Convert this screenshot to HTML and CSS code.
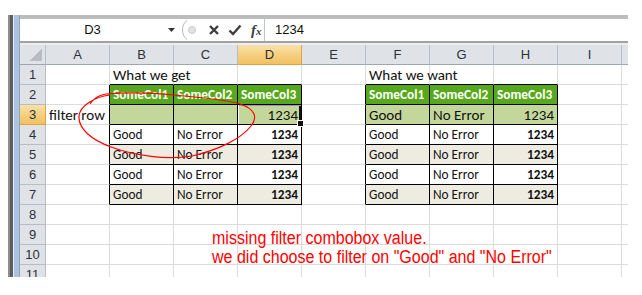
FILE: index.html
```html
<!DOCTYPE html>
<html lang="en">
<head>
    <meta charset="UTF-8">
    <title>Filter row - Excel</title>
    <link rel="stylesheet" href="styles.css">
</head>
<body>
    <div class="app">
        <div class="edge"></div>
        <div class="main">
            <div class="fbar">
                <div class="namebox">D3</div>
                <div class="nb-arrow">
                    <svg width="7" height="4" viewBox="0 0 7 4"><path d="M0 0h7L3.5 4z" fill="#333"/></svg>
                </div>
                <div class="fx-tools">
                    <svg class="grip" width="20" height="22" viewBox="0 0 20 22">
                        <path d="M6 1.5C2.5 4 1.5 8 1.5 11s1 7 4.5 9.5" fill="none" stroke="#b3b3b3"/>
                        <circle cx="11" cy="11" r="3.5" fill="#e3e3e3" stroke="#c9c9c9"/>
                    </svg>
                    <svg class="tool" width="12" height="12" viewBox="0 0 12 12">
                        <path d="M2 2l8 8M10 2l-8 8" stroke="#3f3f3f" stroke-width="2.4"/>
                    </svg>
                    <svg class="tool" width="14" height="12" viewBox="0 0 14 12">
                        <path d="M1.5 6.5l3.5 3.5 7.5-8.5" fill="none" stroke="#3f3f3f" stroke-width="2.4"/>
                    </svg>
                    <span class="fx">f<small>x</small></span>
                </div>
                <div class="fx-input">1234</div>
            </div>

            <table class="sheet">
                <colgroup>
                    <col class="c-rh">
                    <col><col><col><col><col><col><col><col><col><col>
                </colgroup>
                <tr class="colhead">
                    <th class="corner"></th>
                    <th>A</th><th>B</th><th>C</th><th class="on">D</th><th>E</th>
                    <th>F</th><th>G</th><th>H</th><th>I</th><th></th>
                </tr>
                <tr>
                    <th class="rh">1</th>
                    <td></td><td class="above big">What we get</td><td class="above"></td><td class="above"></td><td></td>
                    <td class="above big">What we want</td><td class="above"></td><td class="above"></td><td></td><td></td>
                </tr>
                <tr>
                    <th class="rh">2</th>
                    <td class="before"></td><td class="t hd">SomeCol1</td><td class="t hd">SomeCol2</td><td class="t hd">SomeCol3</td><td class="before"></td>
                    <td class="t hd">SomeCol1</td><td class="t hd">SomeCol2</td><td class="t hd">SomeCol3</td><td></td><td></td>
                </tr>
                <tr>
                    <th class="rh on">3</th>
                    <td class="before big">filter row</td><td class="t flt"></td><td class="t flt"></td><td class="t flt big num sel">1234</td><td class="before"></td>
                    <td class="t flt big">Good</td><td class="t flt big">No Error</td><td class="t flt big num">1234</td><td></td><td></td>
                </tr>
                <tr>
                    <th class="rh">4</th>
                    <td class="before"></td><td class="t">Good</td><td class="t">No Error</td><td class="t num b">1234</td><td class="before"></td>
                    <td class="t">Good</td><td class="t">No Error</td><td class="t num b">1234</td><td></td><td></td>
                </tr>
                <tr>
                    <th class="rh">5</th>
                    <td class="before"></td><td class="t alt">Good</td><td class="t alt">No Error</td><td class="t alt num b">1234</td><td class="before"></td>
                    <td class="t alt">Good</td><td class="t alt">No Error</td><td class="t alt num b">1234</td><td></td><td></td>
                </tr>
                <tr>
                    <th class="rh">6</th>
                    <td class="before"></td><td class="t">Good</td><td class="t">No Error</td><td class="t num b">1234</td><td class="before"></td>
                    <td class="t">Good</td><td class="t">No Error</td><td class="t num b">1234</td><td></td><td></td>
                </tr>
                <tr>
                    <th class="rh">7</th>
                    <td class="before"></td><td class="t alt">Good</td><td class="t alt">No Error</td><td class="t alt num b">1234</td><td class="before"></td>
                    <td class="t alt">Good</td><td class="t alt">No Error</td><td class="t alt num b">1234</td><td></td><td></td>
                </tr>
                <tr>
                    <th class="rh">8</th>
                    <td></td><td></td><td></td><td></td><td></td><td></td><td></td><td></td><td></td><td></td>
                </tr>
                <tr>
                    <th class="rh">9</th>
                    <td></td><td></td><td></td><td></td><td></td><td></td><td></td><td></td><td></td><td></td>
                </tr>
                <tr>
                    <th class="rh">10</th>
                    <td></td><td></td><td></td><td></td><td></td><td></td><td></td><td></td><td></td><td></td>
                </tr>
                <tr>
                    <th class="rh">11</th>
                    <td></td><td></td><td></td><td></td><td></td><td></td><td></td><td></td><td></td><td></td>
                </tr>
            </table>
        </div>
    </div>

    <!-- hand drawn annotation over the sheet -->
    <svg class="ink" width="642" height="295" viewBox="0 0 642 295">
        <path d="M90 104C94 98 99 95 106 94C130 92 155 93 175 95C200 98 226 99 240 104C255 109 258 117 251 126C241 139 218 150 192 156C166 160 136 156 111 147C92 140 78 129 79 116C80 106 94 97 110 95"
              fill="none" stroke="#f00" stroke-width="1.2"/>
    </svg>
    <div class="note">
        missing filter combobox value.<br>
        we did choose to filter on "Good" and "No Error"
    </div>
</body>
</html>
```

FILE: styles.css
```css
:root {
    --cell-font: "Carlito", "Lato", sans-serif;
    --grid: #dadcdd;
    --head-bg: #dfe3e8;
    --head-line: #b7bdc5;
    --table-green: #57a81c;
    --filter-green: #c4d79b;
    --band: #eeece1;
}

* {
    margin: 0;
    padding: 0;
    box-sizing: border-box;
}

body {
    background: white;
    width: 642px;
    height: 295px;
    overflow: hidden;
    position: relative;
    font-family: var(--cell-font);
    color: #111;
}

.app {
    margin: 15px 0 0 8px;
    width: 620px;
    height: 262px;
    display: flex;
    overflow: hidden;
}

.edge {
    width: 12px;
    flex: none;
    background: linear-gradient(to right, #8c8c8c 0 2px, #5d5d5d 2px 5px, #e9eef5 5px 6px, #a8c3e3 6px 11px, #9ba4ae 11px 12px);
}

.main {
    flex: 1;
    overflow: hidden;
    background: #eceef1;
}

/* formula bar */
.fbar {
    display: flex;
    height: 28px;
    background: white;
    border-top: 4px solid #bcbcbc;
    border-bottom: 2px solid #a2a2a2;
    margin-bottom: 2px;
    font-family: "Liberation Sans", sans-serif;
    font-size: 13px;
}

.namebox {
    width: 145px;
    text-align: center;
    line-height: 22px;
    color: #111;
}

.nb-arrow {
    width: 13px;
    display: flex;
    align-items: center;
    justify-content: center;
}

.fx-tools {
    width: 87px;
    display: flex;
    align-items: center;
    border-right: 1px solid #c6c6c6;
    padding-left: 3px;
}

.grip {
    margin-right: 7px;
}

.tool {
    margin-right: 8px;
}

.fx {
    font-family: "Liberation Serif", serif;
    font-style: italic;
    font-weight: bold;
    font-size: 15px;
    color: #3f3f3f;
    margin-left: 1px;
}

.fx small {
    font-size: 11px;
}

.fx-input {
    flex: 1;
    padding-left: 10px;
    line-height: 22px;
    color: #111;
}

/* grid */
.sheet {
    table-layout: fixed;
    width: 666px;
    border-collapse: separate;
    border-spacing: 0;
    background: white;
}

.sheet col {
    width: 64px;
}

.sheet col.c-rh {
    width: 26px;
}

.sheet tr {
    height: 20px;
}

.sheet th {
    background: var(--head-bg);
    border-right: 1px solid var(--head-line);
    border-bottom: 1px solid var(--head-line);
    font-weight: normal;
    font-family: "Liberation Sans", sans-serif;
    font-size: 13px;
    color: #2c3038;
    text-align: center;
    line-height: 19px;
}

.sheet .colhead th {
    border-bottom-color: #9fa6b0;
}

.sheet th.corner {
    background: var(--head-bg) linear-gradient(135deg, transparent 50%, #b9bdc3 50%) no-repeat right 3px bottom 3px / 12px 12px;
}

.sheet th.on {
    background: linear-gradient(#fae0a8, #f1c15f);
    border-color: #e2a33f;
}

.sheet td {
    border-right: 1px solid var(--grid);
    border-bottom: 1px solid var(--grid);
    padding: 0 3px;
    font-size: 13.3px;
    line-height: 18px;
    vertical-align: bottom;
    white-space: nowrap;
    overflow: visible;
}

.sheet td.big {
    font-size: 15px;
}

.sheet td.above {
    border-bottom-color: #000;
}

.sheet td.before {
    border-right-color: #000;
}

.sheet td.t {
    border-right-color: #000;
    border-bottom-color: #000;
    overflow: hidden;
}

.sheet td.hd {
    background: var(--table-green);
    color: white;
    font-weight: bold;
    font-size: 13.3px;
}

.sheet td.flt {
    background: var(--filter-green);
}

.sheet td.alt {
    background: var(--band);
}

.sheet td.num {
    text-align: right;
}

.sheet td.b {
    font-weight: bold;
}

.sheet td.sel {
    position: relative;
    overflow: visible;
    box-shadow: inset 1px 0 0 #fff, inset 0 1px 0 #9d8fd8, inset -2px 0 0 #111;
}

.sheet td.sel::after {
    content: "";
    position: absolute;
    right: -3px;
    bottom: -3px;
    width: 5px;
    height: 5px;
    background: #111;
    border: 1px solid white;
}

/* annotations */
.ink {
    position: absolute;
    left: 0;
    top: 0;
    pointer-events: none;
}

.note {
    position: absolute;
    left: 212px;
    top: 229px;
    color: #f00;
    font-family: "Liberation Sans", sans-serif;
    font-size: 18px;
    line-height: 19px;
    white-space: nowrap;
    transform: scaleX(0.89);
    transform-origin: left top;
}
```
